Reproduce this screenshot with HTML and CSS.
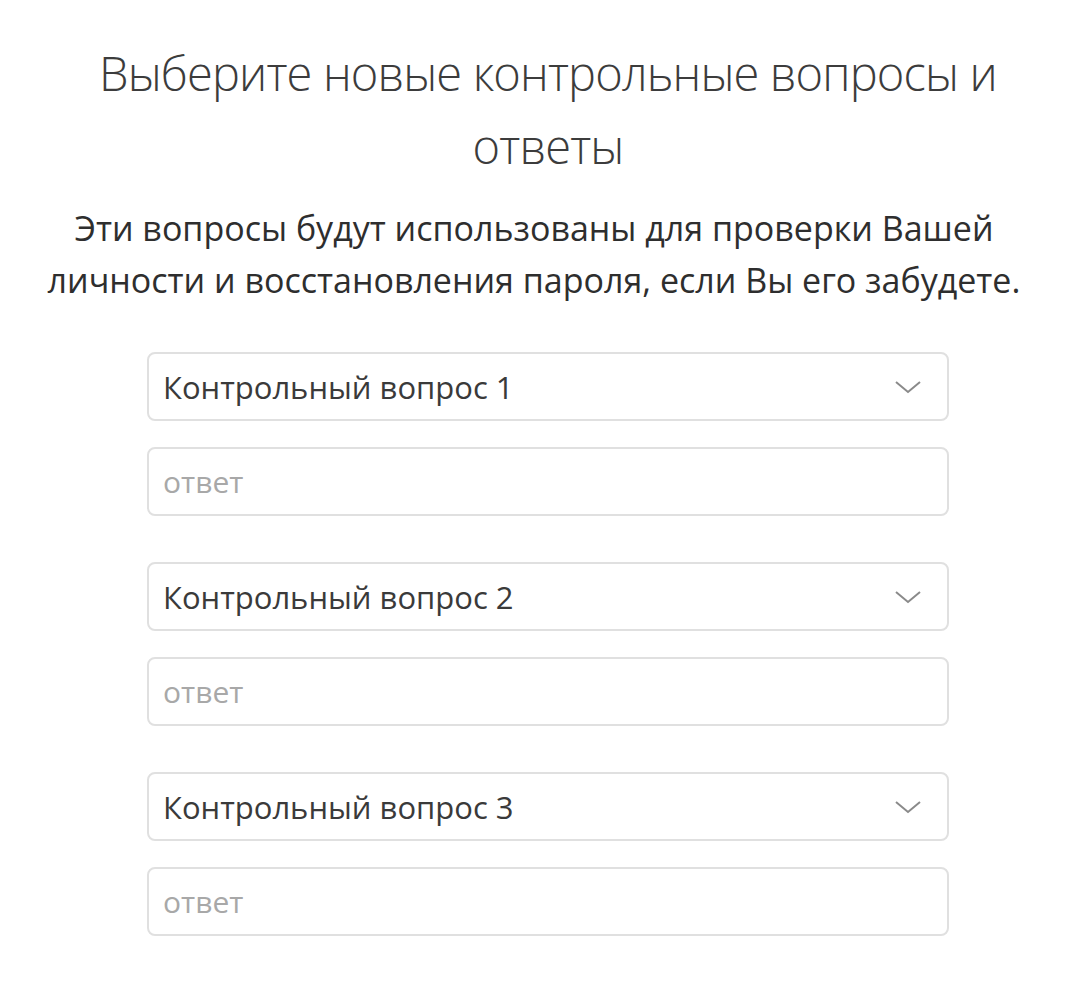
FILE: index.html
```html
<!DOCTYPE html>
<html lang="ru">
<head>
<meta charset="utf-8">
<link rel="stylesheet" href="styles.css">
</head>
<body>
<main class="page">
  <h1 class="title">Выберите новые контрольные вопросы и ответы</h1>
  <p class="subtitle">Эти вопросы будут использованы для проверки Вашей личности и восстановления пароля, если Вы его забудете.</p>
  <div class="form">
    <div class="group">
      <div class="field select">
        <span class="value">Контрольный вопрос 1</span>
        <svg class="chev" width="28" height="16" viewBox="0 0 28 16"><path d="M2 3 L14 13 L26 3" fill="none" stroke="#8a8a8a" stroke-width="2"/></svg>
      </div>
      <div class="field"><span class="ph">ответ</span></div>
    </div>
    <div class="group">
      <div class="field select">
        <span class="value">Контрольный вопрос 2</span>
        <svg class="chev" width="28" height="16" viewBox="0 0 28 16"><path d="M2 3 L14 13 L26 3" fill="none" stroke="#8a8a8a" stroke-width="2"/></svg>
      </div>
      <div class="field"><span class="ph">ответ</span></div>
    </div>
    <div class="group">
      <div class="field select">
        <span class="value">Контрольный вопрос 3</span>
        <svg class="chev" width="28" height="16" viewBox="0 0 28 16"><path d="M2 3 L14 13 L26 3" fill="none" stroke="#8a8a8a" stroke-width="2"/></svg>
      </div>
      <div class="field"><span class="ph">ответ</span></div>
    </div>
  </div>
</main>
</body>
</html>
```

FILE: styles.css
```css
html, body {
  margin: 0;
  padding: 0;
  background: #fff;
}
body {
  font-family: "Open Sans", "Noto Sans", sans-serif;
  color: #333;
}
.page {
  width: 1068px;
  padding-top: 37px;
  display: flex;
  flex-direction: column;
  align-items: center;
}
.title {
  margin: 0 0 0 28px;
  width: 930px;
  text-align: center;
  font-weight: 300;
  font-size: 47px;
  letter-spacing: -0.85px;
  line-height: 73px;
  color: #3c3c3c;
}
.subtitle {
  margin: 19px 0 0 0;
  width: 1060px;
  text-align: center;
  font-size: 34px;
  letter-spacing: 0;
  line-height: 52px;
  color: #2e2e2e;
}
.form {
  margin: 46px 0 0 28px;
  width: 802px;
  display: flex;
  flex-direction: column;
  gap: 46px;
}
.group {
  display: flex;
  flex-direction: column;
  gap: 26px;
}
.field {
  box-sizing: border-box;
  height: 69px;
  border: 2px solid #e0e0e0;
  border-radius: 8px;
  padding: 0 25px 0 14px;
  display: flex;
  align-items: center;
  justify-content: space-between;
}
.value {
  font-size: 31px;
  color: #3a3a3a;
}
.ph {
  font-size: 30px;
  color: #a8a8a8;
}
```
